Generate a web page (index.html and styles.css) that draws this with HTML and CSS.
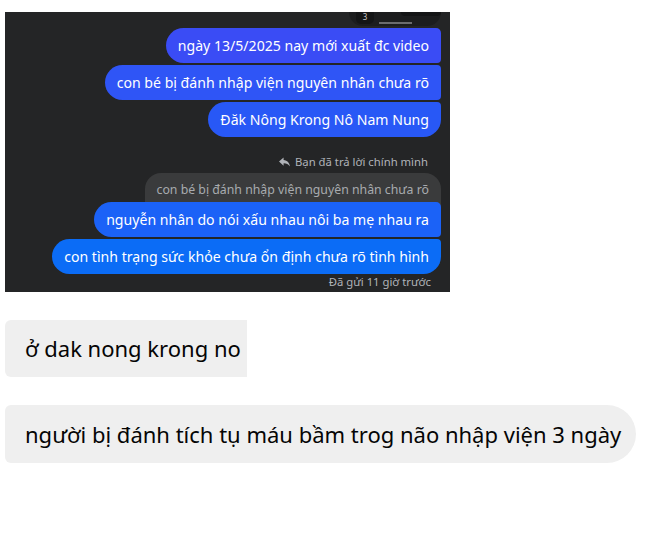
FILE: index.html
```html
<!DOCTYPE html>
<html lang="vi">
<head>
    <meta charset="UTF-8">
    <meta name="viewport" content="width=device-width, initial-scale=1.0">
    <title>Tin nhắn</title>
    <link rel="stylesheet" href="styles.css">
</head>
<body>
    <div class="page">
        <div class="shot">
            <div class="video-tail">
                <span class="video-num">3</span>
                <span class="video-bar"></span>
                <span class="video-box"></span>
            </div>

            <div class="group">
                <div class="bubble b1 first">ngày 13/5/2025 nay mới xuất đc video</div>
                <div class="bubble b2">con bé bị đánh nhập viện nguyên nhân chưa rõ</div>
                <div class="bubble b3 last">Đăk Nông Krong Nô Nam Nung</div>
            </div>

            <div class="reply-note">
                <svg width="11" height="10" viewBox="0 0 12 10">
                    <path d="M5 0 L0 4.5 L5 9 L5 6.3 C8 6.2 10 7.2 12 10 C11.4 6 9.2 3.3 5 2.8 Z" fill="#b0b3b8"/>
                </svg>
                <span>Bạn đã trả lời chính mình</span>
            </div>

            <div class="group">
                <div class="quoted">con bé bị đánh nhập viện nguyên nhân chưa rõ</div>
                <div class="bubble b4 first">nguyễn nhân do nói xấu nhau nôi ba mẹ nhau ra</div>
                <div class="bubble b5 last">con tình trạng sức khỏe chưa ổn định chưa rõ tình hình</div>
            </div>

            <div class="sent-note">Đã gửi 11 giờ trước</div>
        </div>

        <div class="comments">
            <div class="comment square">ở dak nong krong no</div>
            <div class="comment round">người bị đánh tích tụ máu bầm trog não nhập viện 3 ngày</div>
        </div>
    </div>
</body>
</html>
```

FILE: styles.css
```css
* {
    margin: 0;
    padding: 0;
    box-sizing: border-box;
}

body {
    background-color: #ffffff;
    font-family: 'Noto Sans', 'Open Sans', sans-serif;
}

.page {
    padding: 12px 0 0 5px;
}

/* Messenger screenshot */
.shot {
    width: 445px;
    height: 280px;
    background-color: #242526;
    display: flex;
    flex-direction: column;
    align-items: flex-end;
    padding-right: 9px;
    overflow: hidden;
}

.video-tail {
    width: 92px;
    height: 14px;
    background-color: #1c1d1e;
    border-radius: 0 0 14px 14px;
    position: relative;
    margin-bottom: 2px;
}

.video-num {
    position: absolute;
    left: 7px;
    top: 0;
    width: 18px;
    height: 12px;
    font-size: 8px;
    line-height: 10px;
    text-align: center;
    color: #c8c8c8;
    background-color: #141516;
    border-radius: 0 0 5px 5px;
}

.video-box {
    position: absolute;
    right: 0;
    top: 0;
    width: 40px;
    height: 4px;
    background-color: #141516;
    border-radius: 0 0 6px 6px;
}

.video-bar {
    position: absolute;
    left: 30px;
    bottom: 2px;
    width: 33px;
    height: 2px;
    background-color: #6b6c6e;
}

.group {
    display: flex;
    flex-direction: column;
    align-items: flex-end;
    gap: 2px;
}

.bubble {
    height: 35px;
    line-height: 35px;
    padding: 0 12px;
    font-size: 14.1px;
    color: #ffffff;
    border-radius: 18px 4px 4px 18px;
    white-space: nowrap;
}

.bubble.first {
    border-top-right-radius: 5px;
}

.bubble.last {
    border-bottom-right-radius: 18px;
}

.b1 { background-color: #3a4cf5; }
.b2 { background-color: #2f55f6; }
.b3 { background-color: #2858f6; }
.b4 { background-color: #1b62f7; }
.b5 { background-color: #0b6cf6; }

.reply-note {
    display: flex;
    align-items: center;
    gap: 5px;
    margin: 17px 13px 0 0;
    font-size: 11.3px;
    color: #b0b3b8;
}

.quoted {
    background-color: #3a3b3c;
    color: #a8abaf;
    font-size: 12.3px;
    padding: 8px 12px 15px;
    margin-top: 4px;
    margin-bottom: -13px;
    border-radius: 16px 16px 0 0;
    white-space: nowrap;
}

.sent-note {
    font-size: 11.3px;
    color: #b0b3b8;
    margin-right: 1px;
    padding-right: 9px;
}

/* Comments below */
.comments {
    display: flex;
    flex-direction: column;
    align-items: flex-start;
    gap: 28px;
    margin-top: 28px;
}

.comment {
    background-color: #efefef;
    color: #050505;
    font-size: 22px;
    height: 57px;
    line-height: 57px;
    padding: 0 15px 0 20px;
    white-space: nowrap;
}

.square {
    border-radius: 6px 0 0 6px;
    padding-right: 6px;
}

.round {
    height: 58px;
    line-height: 58px;
    border-radius: 6px 29px 29px 6px;
}
```
